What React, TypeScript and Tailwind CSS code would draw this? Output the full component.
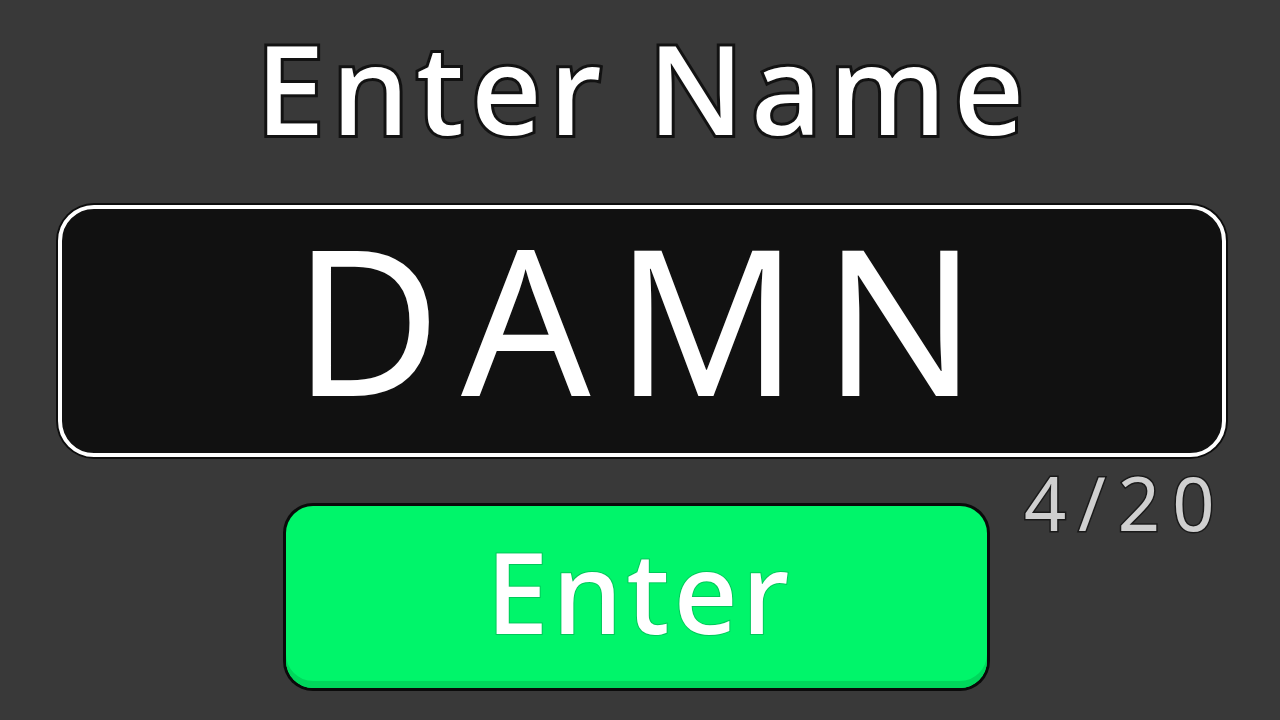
export default function App() {
  const name = 'DAMN';
  const max = 20;

  return (
    <main className="h-[720px] w-[1280px] overflow-hidden bg-[#393939] flex flex-col items-center font-['Noto_Sans',sans-serif]">
      <h1 className="mt-[8px] py-[4px] text-[124px] leading-[150px] font-medium text-white tracking-[7px] pl-[7px] [-webkit-text-stroke:6px_#121212] [paint-order:stroke_fill]">
        Enter Name
      </h1>

      <div className="mt-[37px] ml-[4px] w-[1172px] h-[256px] rounded-[38px] bg-[#0d0d0d] p-[2px]">
        <div className="h-full w-full rounded-[36px] border-[4px] border-white bg-[#111111] flex items-center justify-center">
          <span className="text-[203px] leading-none font-normal text-white tracking-[24px] pb-[28px] ml-[10px]">{name}</span>
        </div>
      </div>

      <div className="w-[1172px] ml-[4px] grid grid-cols-[227px_707px_1fr]">
        <div />
        <button className="mt-[44px] h-[188px] rounded-[30px] bg-[#0a0a0a] p-[3px]">
          <div className="h-full w-full rounded-[27px] bg-[#00f56a] shadow-[inset_0_-7px_0_#00d85c] flex items-center justify-center">
            <span className="text-[112px] leading-none font-medium text-white tracking-[4px] pl-[6px] pb-[12px] [-webkit-text-stroke:2px_#00c95a] [paint-order:stroke_fill]">
              Enter
            </span>
          </div>
        </button>
        <div className="pl-[34px] pt-[4px]">
          <span className="text-[74px] leading-[80px] font-normal text-[#cfcfcf] tracking-[12px] [-webkit-text-stroke:3px_#1a1a1a] [paint-order:stroke_fill]">
            {name.length}/{max}
          </span>
        </div>
      </div>
    </main>
  );
}
